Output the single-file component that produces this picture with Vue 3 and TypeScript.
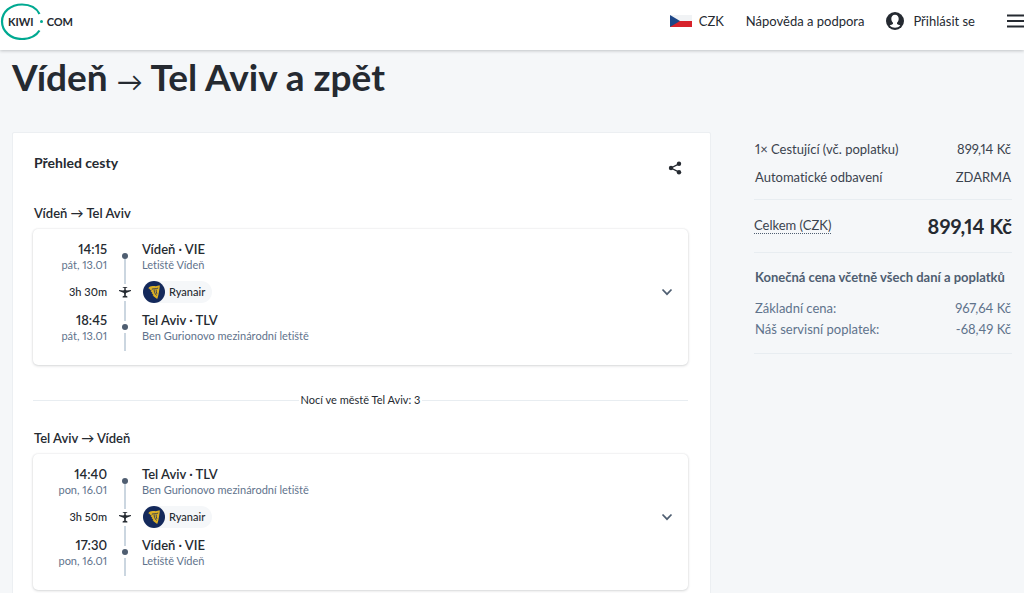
<script setup lang="ts">
interface Stop {
  time: string
  date: string
  place: string
  airport: string
}
interface Leg {
  from: string
  to: string
  duration: string
  carrier: string
  stops: [Stop, Stop]
  nights?: string
}

const legs: Leg[] = [
  {
    from: 'Vídeň',
    to: 'Tel Aviv',
    duration: '3h 30m',
    carrier: 'Ryanair',
    stops: [
      { time: '14:15', date: 'pát, 13.01', place: 'Vídeň · VIE', airport: 'Letiště Vídeň' },
      { time: '18:45', date: 'pát, 13.01', place: 'Tel Aviv · TLV', airport: 'Ben Gurionovo mezinárodní letiště' },
    ],
    nights: 'Nocí ve městě Tel Aviv: 3',
  },
  {
    from: 'Tel Aviv',
    to: 'Vídeň',
    duration: '3h 50m',
    carrier: 'Ryanair',
    stops: [
      { time: '14:40', date: 'pon, 16.01', place: 'Tel Aviv · TLV', airport: 'Ben Gurionovo mezinárodní letiště' },
      { time: '17:30', date: 'pon, 16.01', place: 'Vídeň · VIE', airport: 'Letiště Vídeň' },
    ],
  },
]
</script>

<template>
  <div class="page">
    <header class="topbar">
      <a class="logo" href="#" aria-label="Kiwi.com">
        <svg class="logo-ring" viewBox="0 0 42 38" aria-hidden="true">
          <path d="M39.5 12C36.500 6 30 2.500 22 2.500 10.500 2.500 2 10 2 19.500s8.500 17.500 20 17.500c7.500 0 14-3 17.500-8.500" />
        </svg>
        <span class="logo-text"><span>KIWI</span><i class="logo-dot"></i><span>COM</span></span>
      </a>
      <nav class="menu">
        <button class="menu-item" type="button">
          <svg class="flag" viewBox="0 0 22 12" aria-hidden="true">
            <path fill="#f1f3f5" d="M0 0h22v6H0z" />
            <path fill="#d7222b" d="M0 6h22v6H0z" />
            <path fill="#1d4687" d="M0 0l10 6-10 6z" />
          </svg>
          <span>CZK</span>
        </button>
        <a class="menu-item" href="#">Nápověda a podpora</a>
        <a class="menu-item account" href="#">
          <svg class="avatar" viewBox="0 0 18 18" aria-hidden="true">
            <circle cx="9" cy="9" r="9" fill="#252a31" />
            <path fill="#fff" d="M9 2.800c2.400 0 3.700 1.700 3.700 4 0 1.700-.7 3.200-1.700 4v1c.3.800 2.400 1 3.300 1.800C13 15.200 11 15.800 9 15.800s-4-.6-5.300-2.200c.9-.8 3-1 3.300-1.800v-1C6 10 5.300 8.500 5.300 6.800c0-2.300 1.300-4 3.700-4z" />
          </svg>
          <span>Přihlásit se</span>
        </a>
        <button class="burger" type="button" aria-label="Menu">
          <svg viewBox="0 0 20 14" aria-hidden="true">
            <path d="M1 1.500h18M1 7h18M1 12.500h18" />
          </svg>
        </button>
      </nav>
    </header>

    <main class="content">
      <h1 class="title">Vídeň <span class="arrow">→</span> Tel Aviv a zpět</h1>

      <div class="columns">
        <section class="trip">
          <div class="trip-head">
            <h2>Přehled cesty</h2>
            <button class="share" type="button" aria-label="Sdílet">
              <svg viewBox="0 0 14 14" aria-hidden="true">
                <path d="M11 2.800L3 7l8 4.200" fill="none" stroke="#252a31" stroke-width="1.300" />
                <circle cx="11" cy="2.800" r="2.200" />
                <circle cx="3" cy="7" r="2.200" />
                <circle cx="11" cy="11.200" r="2.200" />
              </svg>
            </button>
          </div>

          <template v-for="leg in legs" :key="leg.from">
            <h3 class="route">{{ leg.from }} <span class="arrow">→</span> {{ leg.to }}</h3>
            <article class="leg">
              <div class="times">
                <div class="stop">
                  <span class="strong">{{ leg.stops[0].time }}</span>
                  <span class="minor">{{ leg.stops[0].date }}</span>
                </div>
                <div class="flight duration">{{ leg.duration }}</div>
                <div class="stop">
                  <span class="strong">{{ leg.stops[1].time }}</span>
                  <span class="minor">{{ leg.stops[1].date }}</span>
                </div>
              </div>
              <div class="track" aria-hidden="true">
                <i class="dot"></i>
                <i class="line first"></i>
                <svg class="plane" viewBox="0 0 12 12">
                  <path d="M3.800 1h4.400v.8H6.700v2l1 .8L12 3.900v1L7 7.100l-.3 2.500 1.700 1v.8H3.600v-.8l1.700-1L5 7.100 0 4.900v-1l4.300.7 1-.8v-2H3.800z" />
                </svg>
                <i class="line second"></i>
                <i class="dot"></i>
                <i class="line third"></i>
              </div>
              <div class="places">
                <div class="stop">
                  <span class="strong">{{ leg.stops[0].place }}</span>
                  <span class="minor">{{ leg.stops[0].airport }}</span>
                </div>
                <div class="flight">
                  <span class="carrier">
                    <svg viewBox="0 0 22 22" aria-hidden="true">
                      <circle cx="11" cy="11" r="11" fill="#14295b" />
                      <path fill="#dcb024" d="M5.300 7.200C6.500 5.200 8.500 4.600 11 5c2.200.4 3.800 0 5.700-.7.300 2-.3 3.600-.6 5.600-.4 2.700-.8 5.300-1.900 8l-3.400-2.300-1.300-1.500 1.200.2-2.200-2.200 1.200.1L7.600 10l1.300.1-2.500-1.600 1.100-.2z" />
                      <path fill="none" stroke="#14295b" stroke-width=".8" d="M8.800 8.200c2-.9 4 .1 6.400-1.200M11.200 8.600c-.3 1.800.5 3.700 2.300 5.900M13.200 8.700c-.1 1.500.1 2.700.7 4.200" />
                    </svg>
                    <span>{{ leg.carrier }}</span>
                  </span>
                </div>
                <div class="stop">
                  <span class="strong">{{ leg.stops[1].place }}</span>
                  <span class="minor">{{ leg.stops[1].airport }}</span>
                </div>
              </div>
              <button class="expand" type="button" aria-label="Zobrazit podrobnosti">
                <svg viewBox="0 0 12 8" aria-hidden="true"><path d="M1.500 1.500L6 6.200l4.500-4.700" /></svg>
              </button>
            </article>
            <div v-if="leg.nights" class="nights"><span>{{ leg.nights }}</span></div>
          </template>
        </section>

        <aside class="summary">
          <dl class="rows items">
            <div><dt>1× Cestující (vč. poplatku)</dt><dd>899,14 Kč</dd></div>
            <div><dt>Automatické odbavení</dt><dd>ZDARMA</dd></div>
          </dl>
          <div class="total">
            <span class="total-label">Celkem (CZK)</span>
            <strong>899,14 Kč</strong>
          </div>
          <p class="note">Konečná cena včetně všech daní a poplatků</p>
          <dl class="rows details">
            <div><dt>Základní cena:</dt><dd>967,64 Kč</dd></div>
            <div><dt>Náš servisní poplatek:</dt><dd>-68,49 Kč</dd></div>
          </dl>
        </aside>
      </div>
    </main>
  </div>
</template>

<style>
body {
  background: #f5f7f9;
}
</style>

<style scoped>
.page {
  font-family: Lato, "Open Sans", sans-serif;
  font-size: 13px;
  font-variant-ligatures: none;
  font-variant-numeric: proportional-nums;
  color: #252a31;
}
.page button {
  font: inherit;
  color: inherit;
  background: none;
  border: 0;
  padding: 0;
  cursor: pointer;
}
.page a {
  color: inherit;
  text-decoration: none;
}
.page svg {
  display: block;
  flex: none;
}
h1, h2, h3, p, dl, dd {
  margin: 0;
}
.topbar {
  display: flex;
  align-items: center;
  justify-content: space-between;
  height: 50px;
  box-sizing: border-box;
  background: #fff;
  box-shadow: 0 1px 3px rgba(37, 42, 49, 0.25);
}
.logo {
  display: flex;
  align-items: center;
  padding-bottom: 8px;
}
.logo-ring {
  width: 42px;
  height: 38px;
  fill: none;
  stroke: #00a991;
  stroke-width: 2.2;
}
.logo-text {
  display: flex;
  align-items: center;
  gap: 4px;
  margin-left: -34px;
  font-size: 11px;
  font-weight: 700;
}
.logo-dot {
  width: 3px;
  height: 3px;
  margin-left: 2px;
  border-radius: 50%;
  background: #00a991;
}
.menu {
  display: flex;
  align-items: center;
  padding-bottom: 8px;
}
.menu .menu-item {
  display: flex;
  align-items: center;
  gap: 7px;
  margin-right: 22px;
  white-space: nowrap;
}
.flag {
  width: 22px;
  height: 12px;
}
.menu .account {
  gap: 9px;
  margin-right: 31px;
}
.avatar {
  width: 18px;
  height: 18px;
}
.burger {
  width: 18px;
  overflow: hidden;
}
.burger svg {
  width: 20px;
  height: 14px;
  fill: none;
  stroke: #252a31;
  stroke-width: 2;
}
.content {
  padding: 3px 12px 24px;
}
.title {
  font-size: 37px;
  line-height: 48px;
  font-weight: 700;
}
.title .arrow {
  font-size: 26px;
  font-weight: 400;
}
.columns {
  display: grid;
  grid-template-columns: minmax(0, 1fr) 258px;
  gap: 43px;
  align-items: start;
  margin-top: 27px;
}
.trip {
  background: #fff;
  border: 1px solid #eceff2;
  border-radius: 2px;
  padding: 20px 22px 24px 20px;
}
.trip-head {
  display: flex;
  justify-content: space-between;
  align-items: flex-start;
  height: 50px;
  padding-left: 1px;
}
h2 {
  font-size: 14px;
  line-height: 20px;
  font-weight: 700;
}
.share {
  margin: 8px 6px 0 0;
}
.share svg {
  width: 14px;
  height: 14px;
  fill: #252a31;
}
.route {
  padding-left: 1px;
  font-size: 13px;
  line-height: 20px;
  font-weight: 600;
  margin-bottom: 6px;
}
.leg {
  display: grid;
  grid-template-columns: 74px 35px minmax(0, 1fr) auto;
  padding: 12px 15px 14px 0;
  border-radius: 5px;
  box-shadow: 0 0 2px rgba(37, 42, 49, 0.12), 0 1px 3px rgba(37, 42, 49, 0.16);
}
.times {
  text-align: right;
}
.stop {
  display: flex;
  flex-direction: column;
  line-height: 16px;
}
.strong {
  font-size: 13px;
  font-weight: 600;
}
.minor {
  font-size: 11px;
  color: #5f738c;
}
.flight {
  height: 39px;
  box-sizing: border-box;
  padding-bottom: 2px;
  display: flex;
  align-items: center;
}
.duration {
  justify-content: flex-end;
  font-size: 11px;
  font-weight: 500;
}
.track {
  display: flex;
  flex-direction: column;
  align-items: center;
  padding-top: 12px;
}
.dot {
  width: 6px;
  height: 6px;
  border-radius: 50%;
  background: #4f5e71;
}
.line {
  width: 2px;
  background: #cbd6e0;
}
.first {
  height: 25px;
}
.plane {
  width: 12px;
  height: 12px;
  margin: 2px 0 3px;
  fill: #252a31;
}
.second {
  height: 20px;
  margin-bottom: 3px;
}
.third {
  height: 18px;
  margin-top: 3px;
}
.carrier {
  display: flex;
  align-items: center;
  gap: 4px;
  margin-left: 1px;
  padding-right: 7px;
  border-radius: 11px;
  background: #f5f7f9;
  font-size: 11px;
  font-weight: 500;
}
.carrier svg {
  width: 22px;
  height: 22px;
}
.expand {
  align-self: center;
  margin-bottom: 8px;
}
.expand svg {
  width: 12px;
  height: 8px;
  fill: none;
  stroke: #4f5e71;
  stroke-width: 1.7;
}
.nights {
  display: flex;
  align-items: center;
  gap: 2px;
  margin: 27px 0 20px;
  font-size: 11px;
  line-height: 16px;
}
.nights::before,
.nights::after {
  content: "";
  flex: 1;
  height: 1px;
  background: #e8edf1;
}
.summary {
  padding-top: 3px;
  color: #3b434e;
}
.rows > div {
  display: flex;
  justify-content: space-between;
  padding: 0 1px;
}
.items {
  padding-bottom: 8px;
  border-bottom: 1px solid #e8edf1;
}
.items > div {
  line-height: 28px;
}
.total {
  display: flex;
  justify-content: space-between;
  align-items: center;
  height: 53px;
  box-sizing: border-box;
  border-bottom: 1px solid #e8edf1;
}
.total-label {
  line-height: 15px;
  border-bottom: 1px dotted #4f5e71;
}
.total strong {
  font-size: 20px;
  color: #252a31;
}
.note {
  padding: 14px 1px 11px;
  line-height: 20px;
  font-weight: 700;
  color: #4f5e71;
  white-space: nowrap;
}
.details {
  padding-bottom: 13px;
  border-bottom: 1px solid #e8edf1;
  line-height: 21px;
  color: #5f738c;
}
</style>
